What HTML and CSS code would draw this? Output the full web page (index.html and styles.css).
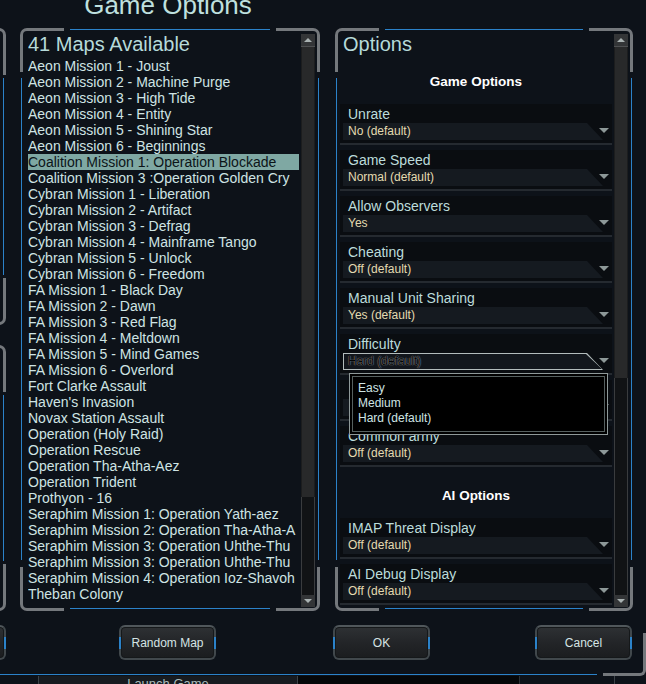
FILE: index.html
```html
<!DOCTYPE html>
<html lang="en">

<head>
    <meta charset="UTF-8">
    <meta name="viewport" content="width=device-width, initial-scale=1.0">
    <title>Game Options</title>
    <link rel="stylesheet" href="styles.css">
</head>

<body>

    <div class="screen">
        <!-- edge of the neighbouring panel, mostly off screen -->
        <div class="edge-panel edge-top"></div>
        <div class="edge-panel edge-bottom"></div>

        <h1 class="dialog-title">Game Options</h1>

        <div class="panels">
            <div class="panel maps">
                <span class="corner tl"></span>
                <span class="corner tr"></span>
                <span class="corner bl"></span>
                <span class="corner br"></span>
                <div class="panel-body">
                    <h2 class="panel-title">41 Maps Available</h2>
                    <ul class="map-list">
                        <li>Aeon Mission 1 - Joust</li>
                        <li>Aeon Mission 2 - Machine Purge</li>
                        <li>Aeon Mission 3 - High Tide</li>
                        <li>Aeon Mission 4 - Entity</li>
                        <li>Aeon Mission 5 - Shining Star</li>
                        <li>Aeon Mission 6 - Beginnings</li>
                        <li class="selected">Coalition Mission 1: Operation Blockade</li>
                        <li>Coalition Mission 3 :Operation Golden Cry</li>
                        <li>Cybran Mission 1 - Liberation</li>
                        <li>Cybran Mission 2 - Artifact</li>
                        <li>Cybran Mission 3 - Defrag</li>
                        <li>Cybran Mission 4 - Mainframe Tango</li>
                        <li>Cybran Mission 5 - Unlock</li>
                        <li>Cybran Mission 6 - Freedom</li>
                        <li>FA Mission 1 - Black Day</li>
                        <li>FA Mission 2 - Dawn</li>
                        <li>FA Mission 3 - Red Flag</li>
                        <li>FA Mission 4 - Meltdown</li>
                        <li>FA Mission 5 - Mind Games</li>
                        <li>FA Mission 6 - Overlord</li>
                        <li>Fort Clarke Assault</li>
                        <li>Haven's Invasion</li>
                        <li>Novax Station Assault</li>
                        <li>Operation (Holy Raid)</li>
                        <li>Operation Rescue</li>
                        <li>Operation Tha-Atha-Aez</li>
                        <li>Operation Trident</li>
                        <li>Prothyon - 16</li>
                        <li>Seraphim Mission 1: Operation Yath-aez</li>
                        <li>Seraphim Mission 2: Operation Tha-Atha-A</li>
                        <li>Seraphim Mission 3: Operation Uhthe-Thu</li>
                        <li>Seraphim Mission 3: Operation Uhthe-Thu</li>
                        <li>Seraphim Mission 4: Operation Ioz-Shavoh</li>
                        <li>Theban Colony</li>
                    </ul>
                </div>
                <div class="scrollbar">
                    <div class="sb-btn up"></div>
                    <div class="sb-thumb"></div>
                    <div class="sb-track"></div>
                    <div class="sb-btn down"></div>
                </div>
            </div>

            <div class="panel options">
                <span class="corner tl"></span>
                <span class="corner tr"></span>
                <span class="corner bl"></span>
                <span class="corner br"></span>
                <div class="panel-body">
                    <h2 class="panel-title">Options</h2>

                    <div class="section-head">Game Options</div>

                    <div class="option-row">
                        <div class="option-label">Unrate</div>
                        <div class="value-line"><div class="value">No (default)</div><span class="arrow"></span></div>
                    </div>
                    <div class="option-row">
                        <div class="option-label">Game Speed</div>
                        <div class="value-line"><div class="value">Normal (default)</div><span class="arrow"></span></div>
                    </div>
                    <div class="option-row">
                        <div class="option-label">Allow Observers</div>
                        <div class="value-line"><div class="value">Yes</div><span class="arrow"></span></div>
                    </div>
                    <div class="option-row">
                        <div class="option-label">Cheating</div>
                        <div class="value-line"><div class="value">Off (default)</div><span class="arrow"></span></div>
                    </div>
                    <div class="option-row">
                        <div class="option-label">Manual Unit Sharing</div>
                        <div class="value-line"><div class="value">Yes (default)</div><span class="arrow"></span></div>
                    </div>
                    <div class="option-row open">
                        <div class="option-label">Difficulty</div>
                        <div class="value-line"><div class="value"><span>Hard (default)</span></div><span class="arrow"></span></div>
                        <ul class="dropdown">
                            <li>Easy</li>
                            <li>Medium</li>
                            <li>Hard (default)</li>
                        </ul>
                    </div>
                    <div class="option-row">
                        <div class="option-label"></div>
                        <div class="value-line"><div class="value"></div><span class="arrow"></span></div>
                    </div>
                    <div class="option-row">
                        <div class="option-label">Common army</div>
                        <div class="value-line"><div class="value">Off (default)</div><span class="arrow"></span></div>
                    </div>

                    <div class="section-head">AI Options</div>

                    <div class="option-row">
                        <div class="option-label">IMAP Threat Display</div>
                        <div class="value-line"><div class="value">Off (default)</div><span class="arrow"></span></div>
                    </div>
                    <div class="option-row">
                        <div class="option-label">AI Debug Display</div>
                        <div class="value-line"><div class="value">Off (default)</div><span class="arrow"></span></div>
                    </div>
                </div>
                <div class="scrollbar">
                    <div class="sb-btn up"></div>
                    <div class="sb-thumb"></div>
                    <div class="sb-track"></div>
                    <div class="sb-btn down"></div>
                </div>
            </div>
        </div>

        <div class="footer">
            <div class="actions">
                <div class="btn btn-stub"></div>
                <div class="btn btn-random">Random Map</div>
                <div class="btn btn-ok">OK</div>
                <div class="btn btn-cancel">Cancel</div>
            </div>
            <div class="base-line"></div>
            <span class="footer-corner"></span>
        </div>

        <div class="launch">
            <div class="launch-tab">Launch Game</div>
            <div class="launch-box"></div>
            <div class="launch-end"></div>
        </div>
    </div>

</body>

</html>
```

FILE: styles.css
```css
* {
    box-sizing: border-box;
}

body {
    margin: 0;
    background: #0d1219;
    font-family: 'Liberation Sans', Arial, sans-serif;
}

.screen {
    position: relative;
    width: 646px;
    height: 684px;
    overflow: hidden;
    display: flex;
    flex-direction: column;
    background: #0d1219;
}

.dialog-title {
    flex: none;
    width: 336px;
    height: 30px;
    margin: -10px 0 0;
    font-size: 26px;
    line-height: 30px;
    font-weight: normal;
    text-align: center;
    color: #bfe0df;
}

/* neighbour panel edge on the far left */
.edge-panel {
    position: absolute;
    left: -40px;
    width: 46px;
    background: linear-gradient(#2b82c9, #2b82c9) no-repeat right 2px center / 1px calc(100% - 100px);
}

.edge-top {
    top: 28px;
    height: 297px;
}

.edge-bottom {
    top: 345px;
    height: 266px;
}

.edge-panel::before,
.edge-panel::after {
    content: '';
    position: absolute;
    right: 0;
    width: 30px;
    height: 44px;
    border: 0 solid #74787c;
    border-right-width: 3px;
}

.edge-panel::before {
    top: 0;
    border-top-width: 3px;
    border-top-right-radius: 7px;
}

.edge-panel::after {
    bottom: 0;
    border-bottom-width: 3px;
    border-bottom-right-radius: 7px;
}

/* panels */
.panels {
    flex: none;
    display: flex;
    gap: 15px;
    padding-left: 20px;
    margin-top: 8px;
}

.panel {
    position: relative;
    display: flex;
    flex: none;
    height: 583px;
}

.maps {
    width: 300px;
    padding: 0 5px 0 8px;
}

.options {
    width: 298px;
    padding: 0 5px;
}

.panel::before {
    content: '';
    position: absolute;
    top: 50px;
    bottom: 51px;
    left: 1px;
    right: 1px;
    border-left: 1px solid #2b82c9;
    border-right: 1px solid #2b82c9;
    pointer-events: none;
}

.panel::after {
    content: '';
    position: absolute;
    top: 1px;
    bottom: 2px;
    left: 50px;
    right: 50px;
    border-top: 1px solid #2b82c9;
    border-bottom: 1px solid #2b82c9;
    pointer-events: none;
}

.corner {
    position: absolute;
    width: 44px;
    height: 44px;
    border: 0 solid #74787c;
    pointer-events: none;
}

.tl {
    top: 0;
    left: 0;
    border-top-width: 3px;
    border-left-width: 3px;
    border-top-left-radius: 7px;
}

.tr {
    top: 0;
    right: 0;
    border-top-width: 3px;
    border-right-width: 3px;
    border-top-right-radius: 7px;
}

.bl {
    bottom: 0;
    left: 0;
    border-bottom-width: 3px;
    border-left-width: 3px;
    border-bottom-left-radius: 7px;
}

.br {
    bottom: 0;
    right: 0;
    border-bottom-width: 3px;
    border-right-width: 3px;
    border-bottom-right-radius: 7px;
}

.panel-body {
    display: flex;
    flex-direction: column;
    margin-right: 2px;
}

.maps .panel-body {
    width: 271px;
    overflow: hidden;
}

.options .panel-body {
    width: 272px;
}

.panel-title {
    margin: 4px 0 2px;
    font-size: 20px;
    line-height: 24px;
    font-weight: normal;
    color: #b6dada;
    white-space: nowrap;
}

.options .panel-title {
    padding-left: 3px;
}

.map-list {
    list-style: none;
    margin: 0;
    padding: 0;
    font-size: 14px;
    line-height: 16px;
    color: #cfe4e4;
    white-space: nowrap;
}

.map-list li {
    height: 16px;
}

.map-list li.selected {
    background: #7fa8a3;
    color: #0c1418;
}

/* scrollbars */
.scrollbar {
    flex: none;
    width: 14px;
    margin: 6px 0 4px;
    display: flex;
    flex-direction: column;
}

.sb-btn {
    flex: none;
    height: 13px;
    background: #333537;
    display: flex;
    align-items: center;
    justify-content: center;
}

.sb-btn::after {
    content: '';
    border-left: 4px solid transparent;
    border-right: 4px solid transparent;
}

.sb-btn.up {
    border-bottom: 1px solid #4e5052;
}

.sb-btn.up::after {
    border-bottom: 4px solid #a9b2b2;
}

.sb-btn.down {
    height: 12px;
}

.sb-btn.down::after {
    border-top: 4px solid #a9b2b2;
}

.sb-thumb {
    flex: none;
    background: #28292a;
    border-left: 1px solid #1c1d1e;
    border-right: 1px solid #1c1d1e;
}

.maps .sb-thumb {
    height: 450px;
}

.options .sb-thumb {
    height: 331px;
}

.sb-track {
    flex: 1;
    background: #111315;
    border-left: 1px solid #3a3c3e;
    border-right: 1px solid #3a3c3e;
}

/* option rows */
.section-head {
    padding: 16px 0 14px;
    font-size: 13.5px;
    line-height: 16px;
    font-weight: bold;
    text-align: center;
    color: #ffffff;
}

.option-row {
    position: relative;
    padding: 2px 0 3px;
    margin-bottom: 5px;
    background: #0a0d11;
    border-bottom: 2px solid #252a30;
}

.option-label {
    height: 16px;
    margin-bottom: 1px;
    padding-left: 8px;
    font-size: 14px;
    line-height: 16px;
    color: #bcdcdb;
    white-space: nowrap;
}

.value-line {
    display: flex;
    align-items: center;
    padding-left: 3px;
}

.value {
    width: 260px;
    height: 17px;
    padding-left: 5px;
    font-size: 12px;
    line-height: 17px;
    color: #e4dbb0;
    background: #151a20;
    white-space: nowrap;
    clip-path: polygon(0 0, calc(100% - 16px) 0, 100% 100%, 0 100%);
}

.arrow {
    width: 0;
    height: 0;
    margin: -2px 0 0 -4px;
    border-left: 5px solid transparent;
    border-right: 5px solid transparent;
    border-top: 5px solid #8d9898;
}

.open .value {
    padding: 1px;
    background: #b3bcbc;
}

.open .value span {
    display: block;
    height: 15px;
    padding-left: 4px;
    line-height: 15px;
    background: #12161c;
    color: #050505;
    text-shadow: 0 0 1px #8c9494, 0 0 1px #8c9494;
    clip-path: polygon(0 0, calc(100% - 16px) 0, 100% 100%, 0 100%);
}

.dropdown {
    position: absolute;
    top: 39px;
    left: 9px;
    z-index: 2;
    width: 259px;
    height: 62px;
    margin: 0;
    padding: 7px 0 0 8px;
    list-style: none;
    background: #000;
    border: 1px solid #8f9999;
    box-shadow: inset 0 0 0 2px #000, inset 0 0 0 3px #566060;
    font-size: 12px;
    line-height: 15px;
    color: #cfe4e4;
}

/* footer */
.footer {
    position: relative;
    flex: none;
    height: 65px;
}

.actions {
    display: flex;
    margin-top: 14px;
}

.btn {
    position: relative;
    flex: none;
    width: 97px;
    height: 35px;
    display: flex;
    align-items: center;
    justify-content: center;
    border: 2px solid #41484c;
    border-top-color: #50575b;
    border-radius: 6px;
    background: linear-gradient(180deg, #2e3134 0%, #232528 50%, #1b1d1f 100%);
    box-shadow: inset 0 0 0 1px #15181a;
    font-size: 12px;
    color: #d6e4e4;
}

.btn::before,
.btn::after {
    content: '';
    position: absolute;
    top: 10px;
    width: 2px;
    height: 12px;
    background: #2b82c9;
}

.btn::before {
    left: -2px;
}

.btn::after {
    right: -2px;
}

.btn-stub {
    margin-left: -91px;
}

.btn-random {
    margin-left: 113px;
}

.btn-ok {
    margin-left: 117px;
}

.btn-cancel {
    margin-left: 105px;
}

.base-line {
    width: 597px;
    height: 1px;
    margin-top: 14px;
    background: #2b82c9;
}

.footer-corner {
    position: absolute;
    right: 0;
    bottom: 0;
    width: 43px;
    height: 43px;
    border-right: 3px solid #74787c;
    border-bottom: 3px solid #74787c;
    border-bottom-right-radius: 6px;
}

/* launch strip, cut by the window */
.launch {
    flex: none;
    display: flex;
    height: 8px;
}

.launch-tab {
    flex: none;
    width: 260px;
    height: 16px;
    margin-left: 38px;
    background: #171b20;
    border-left: 1px solid #3b4248;
    border-right: 1px solid #3b4248;
    text-align: center;
    font-size: 13px;
    line-height: 16px;
    color: #a9baba;
}

.launch-box {
    flex: none;
    width: 222px;
    background: #050709;
    border-right: 1px solid #2b3136;
}

.launch-end {
    flex: none;
    width: 95px;
    border-right: 1px solid #3b4248;
}
```
